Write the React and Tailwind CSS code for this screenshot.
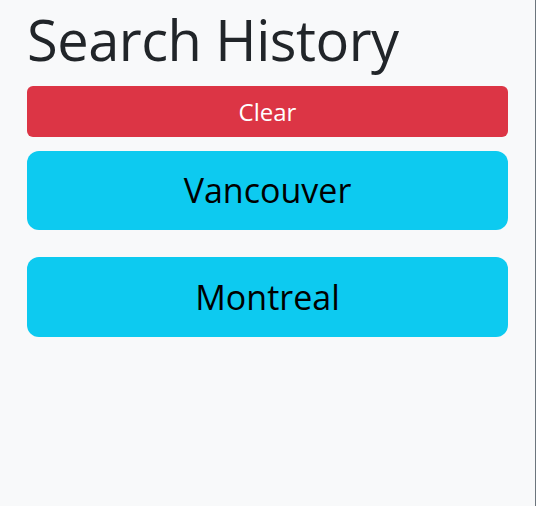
export default function App() {
  const history = ["Vancouver", "Montreal"];

  return (
    <div
      className="min-h-screen w-full bg-[#f8f9fa] border-r border-[#6c757d] px-[27px]"
      style={{ fontFamily: '"Open Sans", "Noto Sans", sans-serif' }}
    >
      <h1 className="pt-[11px] text-[56px] leading-none font-normal tracking-[-0.5px] text-[#212529]">
        Search History
      </h1>

      <button
        type="button"
        className="mt-[19px] flex h-[51px] w-full items-center justify-center rounded-md bg-[#dc3545] text-[24px] text-white"
      >
        Clear
      </button>

      <div className="mt-[14px] flex flex-col gap-[27px]">
        {history.map((city, i) => (
          <button
            key={city}
            type="button"
            className={
              "flex w-full items-center justify-center rounded-xl bg-[#0dcaf0] text-[34px] text-black " +
              (i === 0 ? "h-[79px]" : "h-[80px]")
            }
          >
            {city}
          </button>
        ))}
      </div>
    </div>
  );
}
